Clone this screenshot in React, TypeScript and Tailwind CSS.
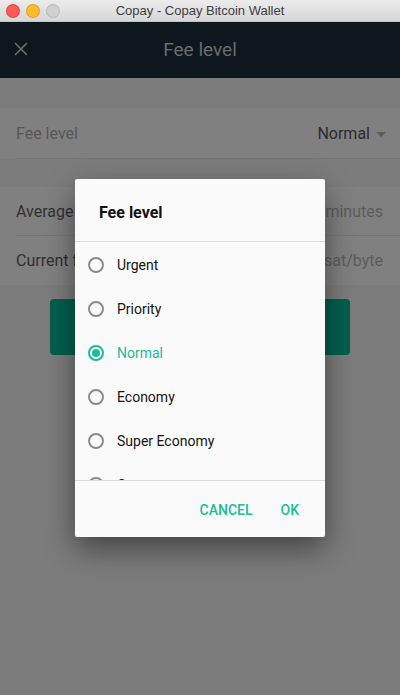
import { X } from "lucide-react";

const levels = ["Urgent", "Priority", "Normal", "Economy", "Super Economy", "Custom"];
const selected = "Normal";

const Radio = ({ checked }: { checked: boolean }) => (
  <span
    className={`flex h-[16px] w-[16px] items-center justify-center rounded-full border-2 ${
      checked ? "border-[#1abc9c]" : "border-[#8c8c8c]"
    }`}
  >
    {checked && <span className="h-[8px] w-[8px] rounded-full bg-[#1abc9c]" />}
  </span>
);

const App = () => {
  return (
    <div className="relative flex h-[695px] w-[400px] flex-col overflow-hidden bg-[#7c7c7c] font-['Roboto',sans-serif]">
      {/* window title bar */}
      <div className="relative flex h-[22px] shrink-0 items-center justify-center border-b border-[#c4c4c4] bg-gradient-to-b from-[#ececec] to-[#d6d6d6]">
        <div className="absolute left-[7px] top-[5px] flex gap-[8px]">
          <span className="h-[12px] w-[12px] rounded-full bg-[#fc5b57] ring-1 ring-[#de4a45]" />
          <span className="h-[12px] w-[12px] rounded-full bg-[#fdbc2e] ring-1 ring-[#dea122]" />
          <span className="h-[12px] w-[12px] rounded-full bg-[#d0d0d0] ring-1 ring-[#bdbdbd]" />
        </div>
        <span className="font-['Liberation_Sans',sans-serif] text-[13px] text-[#3e3e3e]">
          Copay - Copay Bitcoin Wallet
        </span>
      </div>

      {/* app header */}
      <div className="relative flex h-[56px] shrink-0 items-center justify-center bg-[#0e171e]">
        <X className="absolute left-[10px] top-[16px] h-[22px] w-[22px] text-[#6e6e6e]" strokeWidth={1.6} />
        <span className="text-[19px] text-[#6b6b6b]">Fee level</span>
      </div>

      <div className="h-[30px] shrink-0" />

      <div className="bg-[#808080] pl-[16px]">
        <div className="flex h-[51px] items-center justify-between border-b border-[#767676] pr-[14px] pt-[2px] text-[16px]">
          <span className="text-[#575757]">Fee level</span>
          <span className="flex items-center gap-[6px] text-[#2c2c2c]">
            Normal
            <span className="h-0 w-0 border-x-[5px] border-t-[5px] border-x-transparent border-t-[#5c5c5c]" />
          </span>
        </div>
      </div>

      <div className="h-[28px] shrink-0" />

      <div className="bg-[#808080] pl-[16px] text-[16px] text-[#303030]">
        <div className="flex h-[49px] items-center justify-between border-b border-[#767676] pr-[17px] pt-[2px]">
          <span>Average confirmation time</span>
          <span className="text-[#5c5c5c]">~10 minutes</span>
        </div>
        <div className="flex h-[49px] items-center justify-between pr-[17px]">
          <span>Current fee rate</span>
          <span className="text-[#5c5c5c]">40 sat/byte</span>
        </div>
      </div>

      <div className="px-[50px] pt-[14px]">
        <div className="h-[56px] rounded-[4px] bg-[#005f4e]" />
      </div>

      {/* dialog */}
      <div className="absolute left-[75px] top-[179px] flex w-[250px] flex-col rounded-[2px] bg-[#fafafa] shadow-[0_12px_30px_rgba(0,0,0,0.45)]">
        <div className="flex h-[63px] items-center border-b border-[#dcdcdc] pl-[24px] pt-[5px] text-[16px] font-bold text-[#111]">
          Fee level
        </div>
        <div className="h-[238px] overflow-hidden pt-[1px]">
          {levels.map((level) => (
            <div key={level} className="flex h-[44px] items-center gap-[13px] pl-[13px]">
              <Radio checked={level === selected} />
              <span className={`text-[14px] ${level === selected ? "text-[#1abc9c]" : "text-[#141414]"}`}>
                {level}
              </span>
            </div>
          ))}
        </div>
        <div className="flex h-[57px] items-center justify-end gap-[28px] border-t border-[#dcdcdc] pr-[26px] pt-[3px] text-[14px] font-medium text-[#1abc9c]">
          <span>CANCEL</span>
          <span>OK</span>
        </div>
      </div>
    </div>
  );
};

export default App;
